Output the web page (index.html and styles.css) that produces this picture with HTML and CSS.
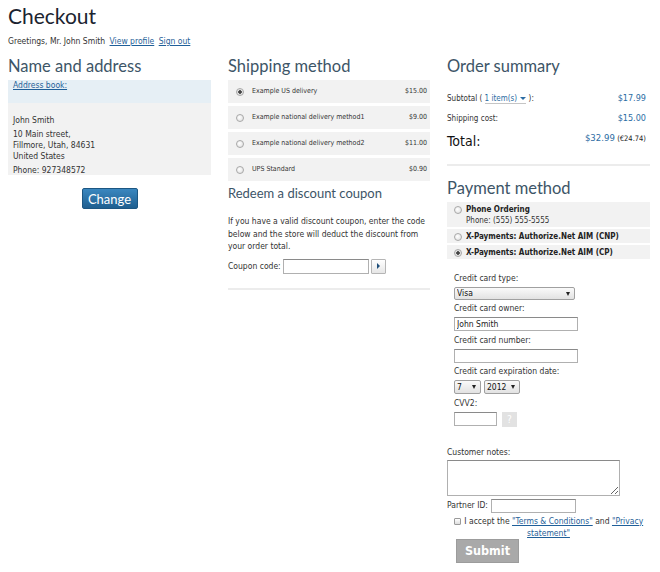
FILE: index.html
```html
<!DOCTYPE html>
<html lang="en">
<head>
  <meta charset="UTF-8">
  <meta name="viewport" content="width=device-width, initial-scale=1.0">
  <title>Checkout</title>
  <link rel="stylesheet" href="styles.css">
</head>
<body>
  <h1 class="page-title">Checkout</h1>
  <div class="greeting">
    Greetings, Mr. John Smith
    <a href="#">View profile</a>
    <a href="#">Sign out</a>
  </div>

  <div class="checkout">
    <!-- Name and address -->
    <div class="column">
      <h2>Name and address</h2>
      <div class="address-book"><a href="#">Address book:</a></div>
      <div class="address">
        <p>John Smith</p>
        <p>10 Main street,<br>Fillmore, Utah, 84631<br>United States</p>
        <p>Phone: 927348572</p>
      </div>
      <button type="button" class="change-btn">Change</button>
    </div>

    <!-- Shipping method -->
    <div class="column">
      <h2>Shipping method</h2>
      <ul class="ship-list">
        <li class="ship-row"><input type="radio" name="ship" class="radio" checked><span class="name">Example US delivery</span><span>$15.00</span></li>
        <li class="ship-row"><input type="radio" name="ship" class="radio"><span class="name">Example national delivery method1</span><span>$9.00</span></li>
        <li class="ship-row"><input type="radio" name="ship" class="radio"><span class="name">Example national delivery method2</span><span>$11.00</span></li>
        <li class="ship-row"><input type="radio" name="ship" class="radio"><span class="name">UPS Standard</span><span>$0.90</span></li>
      </ul>

      <div class="coupon">
        <h3>Redeem a discount coupon</h3>
        <p>If you have a valid discount coupon, enter the code below and the store will deduct the discount from your order total.</p>
        <div class="coupon-form">
          <label for="coupon">Coupon code:</label>
          <input type="text" id="coupon" class="field">
          <button type="button" class="go-btn"><span class="go-arrow"></span></button>
        </div>
      </div>
      <hr class="sep">
    </div>

    <!-- Order summary + payment -->
    <div class="column">
      <h2>Order summary</h2>
      <div class="summary">
        <div class="summary-row">
          <span>Subtotal ( <span class="items">1 item(s) <span class="caret"></span></span> ):</span>
          <span class="price">$17.99</span>
        </div>
        <div class="summary-row">
          <span>Shipping cost:</span>
          <span class="price">$15.00</span>
        </div>
        <div class="summary-row total-row">
          <span class="total-label">Total:</span>
          <span class="total-value"><span class="price">$32.99</span> <span class="alt-price">(&euro;24.74)</span></span>
        </div>
      </div>
      <hr class="sep summary-sep">

      <h2 class="pay-title">Payment method</h2>
      <ul class="pay-list">
        <li class="pay-row">
          <input type="radio" name="pay" class="radio">
          <div><strong>Phone Ordering</strong><br>Phone: (555) 555-5555</div>
        </li>
        <li class="pay-row">
          <input type="radio" name="pay" class="radio">
          <strong>X-Payments: Authorize.Net AIM (CNP)</strong>
        </li>
        <li class="pay-row">
          <input type="radio" name="pay" class="radio" checked>
          <strong>X-Payments: Authorize.Net AIM (CP)</strong>
        </li>
      </ul>

      <div class="card-form">
        <label>Credit card type:</label>
        <span class="select-wrap wide"><select class="select"><option>Visa</option></select></span>
        <label>Credit card owner:</label>
        <input type="text" class="field card-field" value="John Smith">
        <label>Credit card number:</label>
        <input type="text" class="field card-field">
        <label>Credit card expiration date:</label>
        <div class="expiry">
          <span class="select-wrap month"><select class="select"><option>7</option></select></span>
          <span class="select-wrap year"><select class="select"><option>2012</option></select></span>
        </div>
        <label>CVV2:</label>
        <div class="cvv">
          <input type="text" class="field cvv-field">
          <button type="button" class="help-btn">?</button>
        </div>
      </div>

      <div class="notes">
        <label for="notes">Customer notes:</label>
        <textarea id="notes" class="field notes-field"></textarea>
        <div class="partner">
          <label for="partner">Partner ID:</label>
          <input type="text" id="partner" class="field partner-field">
        </div>
        <div class="accept">
          <input type="checkbox" class="check"> I accept the <a href="#">"Terms &amp; Conditions"</a> and <a href="#">"Privacy statement"</a>
        </div>
        <button type="submit" class="submit-btn">Submit</button>
      </div>
    </div>
  </div>
</body>
</html>
```

FILE: styles.css
```css
/* Base */
body {
  margin: 0;
  padding: 0 8px;
  font-family: "DejaVu Sans Condensed", "DejaVu Sans", sans-serif;
  font-stretch: condensed;
  font-size: 8.5px;
  line-height: 11px;
  color: #333;
  background: #fff;
}

a {
  color: #1f5f99;
}

h1, h2, h3 {
  margin: 0;
  font-family: Lato, "Open Sans", sans-serif;
  font-weight: normal;
}

.page-title {
  padding-top: 4px;
  font-size: 21px;
  line-height: 24px;
  color: #1b2430;
}

.greeting {
  margin-top: 7px;
  line-height: 12px;
}

.greeting a {
  margin-left: 2px;
}

/* Columns */
.checkout {
  display: grid;
  grid-template-columns: 203px 202px 203px;
  column-gap: 17px;
  margin-top: 8px;
}

.column h2 {
  margin-bottom: 2px;
  font-size: 16.5px;
  line-height: 23px;
  color: #3d5567;
}

/* Address */
.address-book {
  height: 23px;
  padding: 0 5px;
  background: #e6eff5;
  line-height: 11px;
}

.address {
  height: 72px;
  box-sizing: border-box;
  padding: 12px 5px 0;
  background: #f2f2f2;
}

.address p {
  margin: 0 0 3px;
}

.change-btn {
  display: block;
  width: 56px;
  height: 21px;
  margin: 13px auto 0;
  padding: 0;
  border: 1px solid #1c5682;
  border-radius: 2px;
  background: linear-gradient(#3a87bf, #1f5f90);
  color: #fff;
  font-family: Lato, "Open Sans", sans-serif;
  font-size: 13px;
}

/* Radios and checkbox */
.radio {
  appearance: none;
  -webkit-appearance: none;
  width: 8px;
  height: 8px;
  margin: 0;
  border: 1px solid #a8a8a8;
  border-radius: 50%;
  background: radial-gradient(circle at 40% 40%, #fff, #dcdcdc);
  box-sizing: border-box;
  flex: none;
}

.radio:checked {
  background: radial-gradient(circle, #444 0 1.5px, #e6e6e6 2px);
}

.check {
  appearance: none;
  -webkit-appearance: none;
  width: 7px;
  height: 7px;
  margin: 0 1px 0 0;
  border: 1px solid #9a9a9a;
  border-radius: 1px;
  background: linear-gradient(#fff, #ddd);
  vertical-align: -1px;
}

/* Shipping */
.ship-list {
  list-style: none;
  margin: 0;
  padding: 0;
}

.ship-row {
  display: flex;
  align-items: center;
  height: 23px;
  margin-bottom: 3px;
  padding: 0 3px 0 8px;
  background: #f2f2f2;
  font-size: 7px;
}

.ship-row .radio {
  margin-right: 8px;
}

.ship-row .name {
  flex: 1;
}

/* Coupon */
.coupon h3 {
  margin-top: 4px;
  font-size: 13px;
  line-height: 16px;
  color: #3d5567;
}

.coupon p {
  margin: 14px 0 0;
  line-height: 12.5px;
}

.coupon-form {
  display: flex;
  align-items: center;
  gap: 2px;
  margin-top: 6px;
}

.field {
  box-sizing: border-box;
  margin: 0;
  padding: 0 2px;
  border: 1px solid #b0b0b0;
  border-top-color: #8a8a8a;
  background: #fff;
  font-family: inherit;
  font-size: 8.5px;
  color: #222;
}

.coupon-form .field {
  width: 86px;
  height: 15px;
}

.go-btn {
  display: flex;
  align-items: center;
  justify-content: center;
  width: 15px;
  height: 15px;
  padding: 0;
  border: 1px solid #b5b5b5;
  border-radius: 1px;
  background: linear-gradient(#fff, #e6e6e6);
}

.go-arrow {
  width: 0;
  height: 0;
  border-top: 3px solid transparent;
  border-bottom: 3px solid transparent;
  border-left: 3px solid #1f4f7a;
}

.sep {
  margin: 14px 0 0;
  border: 0;
  border-top: 2px solid #ececec;
}

/* Summary */
.summary {
  padding-top: 8px;
  font-size: 8px;
}

.summary-row {
  display: flex;
  justify-content: space-between;
  align-items: center;
  height: 20px;
}

.price {
  padding-right: 4px;
  color: #2c6ca3;
  font-size: 9px;
}

.items {
  color: #2c6ca3;
  border-bottom: 1px solid #c5c5c5;
}

.caret {
  display: inline-block;
  width: 0;
  height: 0;
  margin-left: 1px;
  border-left: 3px solid transparent;
  border-right: 3px solid transparent;
  border-top: 3px solid #2c6ca3;
  vertical-align: 1px;
}

.total-row {
  height: 26px;
}

.total-label {
  font-size: 14px;
  color: #111;
}

.total-value {
  align-self: flex-start;
  padding-top: 4px;
}

.total-value .price {
  padding-right: 0;
  font-size: 9.5px;
}

.alt-price {
  padding-right: 4px;
  font-size: 7.5px;
  color: #222;
}

.summary-sep {
  margin-top: 10px;
}

.column .sep + h2 {
  margin-top: 11px;
}

/* Payment */
.pay-list {
  list-style: none;
  margin: 1px 0 0;
  padding: 0;
  font-size: 8px;
}

.pay-row {
  display: flex;
  align-items: flex-start;
  margin-bottom: 2px;
  padding: 2px 0 1px 7px;
  background: #f2f2f2;
  line-height: 11px;
}

.pay-row .radio {
  margin: 2px 4px 0 0;
}

.pay-row strong {
  color: #222;
}

.card-form {
  display: flex;
  flex-direction: column;
  align-items: flex-start;
  padding: 8px 0 0 7px;
}

.card-form label {
  margin: 3.5px 0 3px;
}

.select-wrap {
  position: relative;
  display: inline-block;
}

.select-wrap::after {
  content: "";
  position: absolute;
  right: 5px;
  top: 5px;
  border-left: 2.5px solid transparent;
  border-right: 2.5px solid transparent;
  border-top: 4px solid #222;
}

.select {
  appearance: none;
  -webkit-appearance: none;
  width: 100%;
  height: 13px;
  margin: 0;
  padding: 0 2px;
  border: 1px solid #a0a0a0;
  border-radius: 2px;
  background: linear-gradient(#fafafa, #e2e2e2);
  font-family: inherit;
  font-size: 8.5px;
  line-height: 11px;
  color: #111;
}

.expiry .select {
  height: 14px;
}

.wide {
  width: 121px;
}

.month {
  width: 27px;
}

.year {
  width: 36px;
}

.expiry {
  display: flex;
  gap: 3px;
}

.card-field {
  width: 124px;
  height: 14px;
}

.cvv {
  display: flex;
  gap: 5px;
}

.cvv-field {
  width: 43px;
  height: 14px;
}

.help-btn {
  width: 15px;
  height: 15px;
  padding: 0;
  border: 0;
  background: #e2e2e2;
  color: #fff;
  font-family: inherit;
  font-size: 10px;
}

/* Notes */
.notes {
  padding-top: 20px;
}

.notes-field {
  display: block;
  width: 173px;
  height: 36px;
  margin-top: 2px;
}

.partner {
  display: flex;
  align-items: center;
  gap: 3px;
  margin-top: 3px;
}

.partner-field {
  width: 85px;
  height: 14px;
}

.accept {
  margin-top: 2px;
  text-align: center;
  line-height: 12px;
}

.submit-btn {
  display: block;
  width: 63px;
  height: 24px;
  margin: 0 0 0 9px;
  padding: 0;
  border: 1px solid #9c9c9c;
  background: #a9a9a9;
  color: #fff;
  font-family: inherit;
  font-size: 12.5px;
  font-weight: bold;
}
```
